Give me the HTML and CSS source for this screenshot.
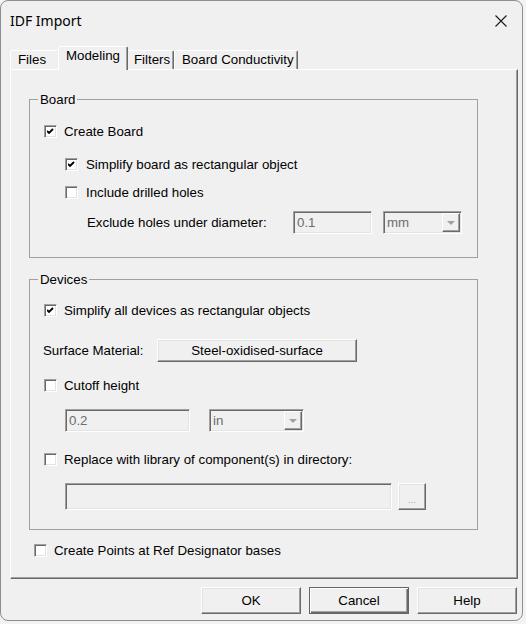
FILE: index.html
```html
<!DOCTYPE html>
<html lang="en">
<head>
  <meta charset="UTF-8">
  <title>IDF Import</title>
  <link rel="stylesheet" href="styles.css">
</head>
<body>

  <div class="window">
    <div class="titlebar">
      <span class="title">IDF Import</span>
      <span class="close-btn">
        <svg width="12" height="12" viewBox="0 0 12 12"><path d="M0.5 0.5 L11.5 11.5 M11.5 0.5 L0.5 11.5" stroke="#1b1b1b" stroke-width="1.1" fill="none"/></svg>
      </span>
    </div>

    <div class="tabs">
      <div class="tab tab-files">Files</div>
      <div class="tab tab-modeling active">Modeling</div>
      <div class="tab tab-filters">Filters</div>
      <div class="tab tab-board">Board Conductivity</div>
    </div>

    <div class="panel">
      <fieldset class="group group-board">
        <legend>Board</legend>
        <label class="check row-create">
          <span class="box"><svg width="7" height="7" viewBox="0 0 7 7"><path d="M0 3 L2 5 L6 1" stroke="#000" stroke-width="1.9" fill="none"/></svg></span>
          Create Board
        </label>
        <label class="check row-indent row-simplify">
          <span class="box"><svg width="7" height="7" viewBox="0 0 7 7"><path d="M0 3 L2 5 L6 1" stroke="#000" stroke-width="1.9" fill="none"/></svg></span>
          Simplify board as rectangular object
        </label>
        <label class="check row-indent row-holes">
          <span class="box"></span>
          Include drilled holes
        </label>
        <div class="row row-exclude">
          <span class="label label-exclude">Exclude holes under diameter:</span>
          <span class="input disabled input-diameter">0.1</span>
          <span class="combo disabled combo-diameter">mm<span class="drop"><span class="arrow"></span></span></span>
        </div>
      </fieldset>

      <fieldset class="group group-devices">
        <legend>Devices</legend>
        <label class="check row-devices">
          <span class="box"><svg width="7" height="7" viewBox="0 0 7 7"><path d="M0 3 L2 5 L6 1" stroke="#000" stroke-width="1.9" fill="none"/></svg></span>
          Simplify all devices as rectangular objects
        </label>
        <div class="row row-material">
          <span class="label label-material">Surface Material:</span>
          <button class="btn btn-material">Steel-oxidised-surface</button>
        </div>
        <label class="check row-cutoff">
          <span class="box"></span>
          Cutoff height
        </label>
        <div class="row row-indent row-height">
          <span class="input disabled input-height">0.2</span>
          <span class="combo disabled combo-height">in<span class="drop"><span class="arrow"></span></span></span>
        </div>
        <label class="check row-library">
          <span class="box"></span>
          Replace with library of component(s) in directory:
        </label>
        <div class="row row-indent row-path">
          <span class="input disabled input-path"></span>
          <button class="btn btn-browse" disabled>...</button>
        </div>
      </fieldset>

      <label class="check row-points">
        <span class="box"></span>
        Create Points at Ref Designator bases
      </label>
    </div>

    <div class="footer">
      <button class="btn btn-dialog">OK</button>
      <button class="btn btn-dialog default">Cancel</button>
      <button class="btn btn-dialog">Help</button>
    </div>
  </div>

</body>
</html>
```

FILE: styles.css
```css
    body {
      margin: 0;
      background: #f3f3f3;
      font-family: "Liberation Sans", Arial, sans-serif;
      font-size: 13.3px;
      color: #000;
    }

    .window {
      width: 523px;
      height: 621px;
      box-sizing: border-box;
      border: 1px solid #8e8e8e;
      border-radius: 8px;
      background: #f0f0f0;
      padding: 0 4px 0 9px;
      display: flex;
      flex-direction: column;
      overflow: hidden;
    }

    /* title bar */
    .titlebar {
      height: 39px;
      display: flex;
      align-items: center;
      justify-content: space-between;
    }

    .title {
      font-family: "Noto Sans", sans-serif;
      font-size: 14px;
      color: #000;
    }

    .close-btn {
      display: flex;
      margin-right: 11px;
    }

    /* tab strip */
    .tabs {
      margin-top: 6px;
      height: 23px;
      display: flex;
      align-items: flex-end;
    }

    .tab {
      box-sizing: border-box;
      height: 19px;
      padding: 1px 0 0 7px;
      line-height: 15px;
      white-space: nowrap;
      border: 1px solid;
      border-bottom: none;
      border-color: #fff #696969 transparent #fff;
      border-radius: 2px 2px 0 0;
      box-shadow: inset -1px 0 #a0a0a0;
    }

    .tab-files { width: 50px; }
    .tab-modeling { width: 70px; }
    .tab-filters { width: 48px; padding-left: 7px; }
    .tab-board { width: 124px; }

    .tab.active {
      height: 24px;
      margin: 0 -2px -1px;
      padding-top: 1px;
      background: #f0f0f0;
      position: relative;
      z-index: 1;
    }

    /* page of the tab control */
    .panel {
      box-sizing: border-box;
      height: 510px;
      border: 1px solid;
      border-color: #fff #696969 #696969 #fff;
      box-shadow: inset -1px -1px #a0a0a0;
    }

    .group {
      width: 449px;
      box-sizing: border-box;
      margin: 0 0 0 18px;
      padding: 0;
      border: 1px solid #a0a0a0;
    }

    .group legend {
      margin-left: 8px;
      padding: 0 2px;
      line-height: 15px;
    }

    .group-board {
      margin-top: 22px;
      padding-bottom: 23px;
    }

    .group-devices {
      margin-top: 14px;
      padding-bottom: 19px;
    }

    /* checkbox rows */
    .check {
      display: flex;
      align-items: center;
      height: 20px;
      padding-left: 14px;
      white-space: nowrap;
    }

    .box {
      box-sizing: border-box;
      width: 13px;
      height: 13px;
      margin-right: 7px;
      display: flex;
      align-items: center;
      justify-content: center;
      background: #fff;
      border: 1px solid;
      border-color: #a0a0a0 #fff #fff #a0a0a0;
      box-shadow: inset 1px 1px #696969, inset -1px -1px #e3e3e3;
    }

    .row {
      display: flex;
      align-items: center;
    }

    .row-indent { padding-left: 35px; }

    .row-create { margin-top: 14px; }
    .row-simplify { margin-top: 13px; }
    .row-simplify .box { margin-right: 8px; }
    .row-holes { margin-top: 8px; }
    .row-holes .box { margin-right: 8px; }

    .row-exclude {
      margin-top: 9px;
      height: 23px;
      padding-left: 57px;
    }

    .label-exclude { width: 206px; }

    .row-devices { margin-top: 13px; }

    .row-material {
      margin-top: 19px;
      height: 23px;
      padding-left: 13px;
    }

    .label-material { width: 114px; }

    .row-cutoff { margin-top: 13px; }

    .row-height {
      margin-top: 14px;
      height: 23px;
    }

    .row-library { margin-top: 17px; }

    .row-path {
      margin-top: 14px;
      height: 27px;
    }

    .row-points {
      margin-top: 10px;
      padding-left: 23px;
    }

    /* edit boxes and combos */
    .input, .combo {
      box-sizing: border-box;
      height: 23px;
      display: flex;
      align-items: center;
      padding-left: 3px;
      border: 1px solid;
      border-color: #a0a0a0 #fff #fff #a0a0a0;
      box-shadow: inset 1px 1px #696969, inset -1px -1px #e3e3e3;
    }

    .disabled {
      color: #6d6d6d;
      background: #f0f0f0;
    }

    .input-diameter { width: 79px; }
    .combo-diameter { width: 79px; margin-left: 11px; }
    .input-height { width: 125px; }
    .combo-height { width: 95px; margin-left: 19px; }
    .input-path { width: 327px; height: 27px; }

    .combo {
      justify-content: space-between;
      padding-right: 1px;
    }

    .drop {
      box-sizing: border-box;
      width: 18px;
      height: 19px;
      display: flex;
      align-items: center;
      justify-content: center;
      border: 1px solid;
      border-color: #fff #696969 #696969 #fff;
      box-shadow: inset -1px -1px #a0a0a0;
    }

    .arrow {
      width: 0;
      height: 0;
      border-left: 4px solid transparent;
      border-right: 4px solid transparent;
      border-top: 4px solid #a0a0a0;
    }

    /* push buttons */
    .btn {
      box-sizing: border-box;
      font-family: "Liberation Sans", Arial, sans-serif;
      font-size: 13.3px;
      color: #000;
      background: #f0f0f0;
      padding: 0;
      border: 1px solid;
      border-color: #fff #696969 #696969 #fff;
      box-shadow: inset -1px -1px #a0a0a0, inset 1px 1px #e3e3e3;
    }

    .btn-material {
      width: 200px;
      height: 23px;
    }

    .btn-browse {
      width: 28px;
      height: 27px;
      margin-left: 6px;
      color: #a0a0a0;
      font-size: 9px;
      padding-top: 6px;
    }

    .footer {
      display: flex;
      justify-content: flex-end;
      gap: 8px;
      margin-top: 8px;
      padding-right: 1px;
    }

    .btn-dialog {
      width: 100px;
      height: 27px;
    }

    .btn-dialog.default {
      border-color: #646464;
      box-shadow: inset 1px 1px #fff, inset -1px -1px #696969, inset -2px -2px #a0a0a0;
    }
```
